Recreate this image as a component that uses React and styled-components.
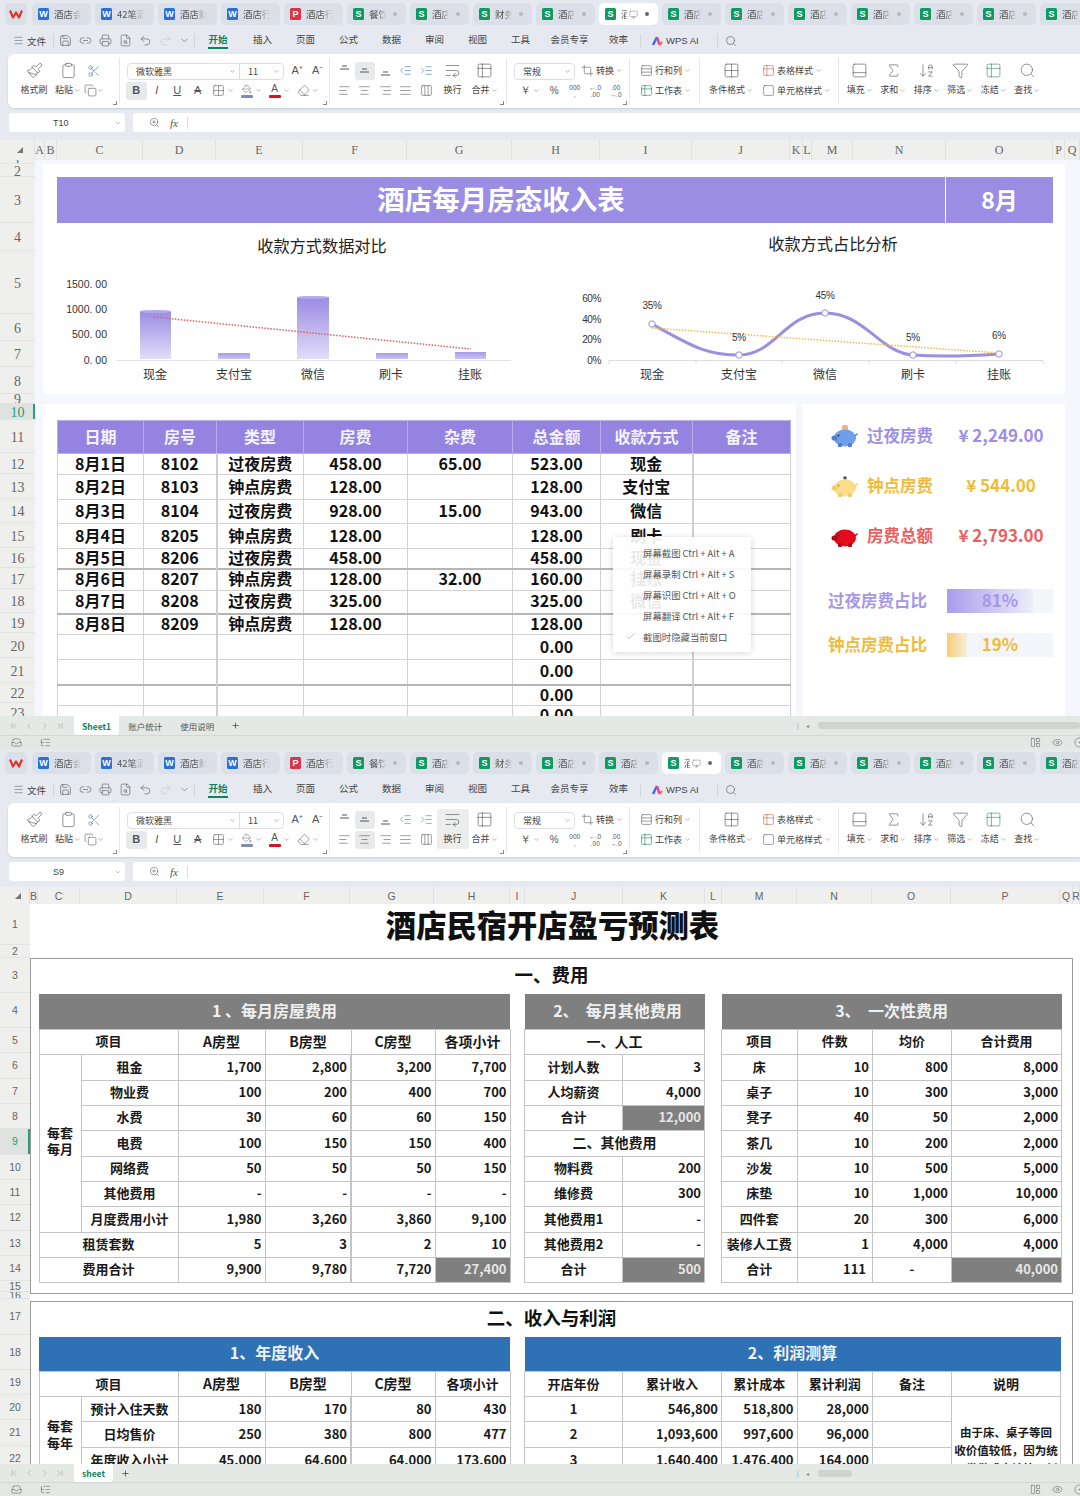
import React from "react";
import styled, { createGlobalStyle } from "styled-components";
import {
  AlignCenter, AlignJustify, AlignLeft, AlignRight, ArrowDownAZ, Check, ChevronDown, ChevronFirst,
  ChevronLast, ChevronLeft, ChevronRight, Clipboard, CircleDot, Copy, Crop, Eraser, Eye, Funnel, Grid2x2,
  IndentDecrease, IndentIncrease, Inbox, LayoutPanelLeft, ListTree, Menu, Monitor, PaintBucket, Paintbrush,
  PanelBottom, Plus, Printer, Redo2, Rows3, Save, Scissors, Search, Sigma, Square, Table2, Undo2, WrapText, ZoomIn,
  Columns3, Link2, FileSearch,
} from "lucide-react";

const CJK = `"Noto Sans CJK SC", "Noto Sans", sans-serif`;
const GREEN = "#12805e";

const GlobalStyle = createGlobalStyle`
  html, body { margin: 0; padding: 0; background: #fff; }
  body { width: 1080px; height: 1496px; overflow: hidden; font-family: ${CJK}; }
  * { box-sizing: border-box; }
`;

const Page = styled.div`
  width: 1080px;
  height: 1496px;
  display: flex;
  flex-direction: column;
  overflow: hidden;
`;

const Window = styled.section`
  height: ${(p) => p.$h}px;
  flex: none;
  display: flex;
  flex-direction: column;
  background: #e6e9f0;
  overflow: hidden;
`;

/* ---------- title tabs ---------- */
const TabBar = styled.div`
  height: 27px;
  flex: none;
  display: flex;
  padding: 3px 0 0 5px;
  overflow: hidden;
`;
const LogoTile = styled.div`
  width: 22px;
  height: 22px;
  margin-right: 5px;
  flex: none;
  border-radius: 5px;
  background: #dadfe8;
  display: flex;
  align-items: center;
  justify-content: center;
`;
const DocTab = styled.div`
  width: 59px;
  height: 22px;
  margin-right: 4px;
  flex: none;
  border-radius: 5px;
  background: ${(p) => (p.$active ? "#fff" : "#dadfe8")};
  display: flex;
  align-items: center;
  padding-left: 6px;
  position: relative;
`;
const DocIcon = styled.span`
  width: 11px;
  height: 12px;
  flex: none;
  border-radius: 1.5px;
  background: ${(p) => p.$bg};
  color: #fff;
  font: 700 9px/12px "Liberation Sans", sans-serif;
  text-align: center;
`;
const DocName = styled.span`
  margin-left: 5px;
  width: ${(p) => p.$w}px;
  font-size: 9.5px;
  color: #555;
  white-space: nowrap;
  overflow: hidden;
  -webkit-mask-image: linear-gradient(90deg, #000 55%, transparent);
  mask-image: linear-gradient(90deg, #000 55%, transparent);
`;
const DocDot = styled.span`
  position: absolute;
  right: 9px;
  top: 9px;
  width: 4px;
  height: 4px;
  border-radius: 50%;
  background: ${(p) => (p.$active ? "#666" : "#b4b8c0")};
`;

const TYPE = { W: "#2b6fd8", P: "#d8344a", S: "#0f9a63" };

function TabRow({ tabs, active }) {
  return (
    <TabBar>
      <LogoTile>
        <svg width="14" height="10" viewBox="0 0 14 10">
          <path d="M1 1.5 L4 8.5 L7 3.5 L10 8.5 L13 1.5" fill="none" stroke="#e0352b" strokeWidth="2.2" strokeLinejoin="round" />
        </svg>
      </LogoTile>
      {tabs.map(([type, name], i) => (
        <DocTab key={i} $active={i === active}>
          <DocIcon $bg={TYPE[type]}>{type}</DocIcon>
          {i === active ? (
            <>
              <DocName $w={7}>酒</DocName>
              <Monitor size={9} color="#777" strokeWidth={1.3} style={{ marginLeft: 1 }} />
            </>
          ) : (
            <DocName $w={type === "S" ? 17 : 27}>{name}</DocName>
          )}
          {type === "S" && <DocDot $active={i === active} />}
        </DocTab>
      ))}
    </TabBar>
  );
}

/* ---------- menu bar ---------- */
const MenuBar = styled.div`
  height: 27px;
  flex: none;
  display: flex;
  align-items: center;
  font-size: 9.5px;
  color: #444;
`;
const FileMenu = styled.div`
  width: 53px;
  padding-left: 13px;
  display: flex;
  align-items: center;
  gap: 3px;
`;
const MenuSep = styled.i`
  width: 1px;
  height: 14px;
  background: #d2d6de;
  flex: none;
`;
const QuickTools = styled.div`
  width: 140px;
  padding-left: 1px;
  display: flex;
  align-items: center;
  justify-content: space-around;
`;
const MenuTab = styled.div`
  width: ${(p) => p.$w || 43}px;
  flex: none;
  text-align: center;
`;
const MenuLabel = styled.span`
  display: inline-block;
  padding-bottom: 2px;
  line-height: 12px;
  font-weight: ${(p) => (p.$active ? 700 : 400)};
  color: ${(p) => (p.$active ? GREEN : "inherit")};
  border-bottom: 2px solid ${(p) => (p.$active ? GREEN : "transparent")};
`;
const AiLink = styled.div`
  width: 76px;
  padding-left: 11px;
  display: flex;
  align-items: center;
  gap: 3px;
  font: 9.5px "Liberation Sans", sans-serif;
`;

const icon = { size: 13, strokeWidth: 1.1, color: "#555" };

function MenuRow() {
  return (
    <MenuBar>
      <FileMenu>
        <Menu size={11} strokeWidth={1.1} color="#555" />
        文件
      </FileMenu>
      <MenuSep />
      <QuickTools>
        <Save {...icon} />
        <Link2 {...icon} />
        <Printer {...icon} />
        <FileSearch {...icon} />
        <Undo2 {...icon} />
        <Redo2 {...icon} color="#c2c5cb" />
        <ChevronDown size={11} strokeWidth={1.2} color="#555" />
      </QuickTools>
      <MenuSep />
      <MenuTab $w={46}>
        <MenuLabel $active>开始</MenuLabel>
      </MenuTab>
      {["插入", "页面", "公式", "数据", "审阅", "视图", "工具"].map((t) => (
        <MenuTab key={t}>
          <MenuLabel>{t}</MenuLabel>
        </MenuTab>
      ))}
      <MenuTab $w={55}>
        <MenuLabel>会员专享</MenuLabel>
      </MenuTab>
      <MenuTab>
        <MenuLabel>效率</MenuLabel>
      </MenuTab>
      <MenuSep />
      <AiLink>
        <svg width="11" height="10" viewBox="0 0 11 10">
          <path d="M1 9 L5 1" stroke="#3b6cf0" strokeWidth="2.4" />
          <path d="M5 1 L7.5 9" stroke="#e8409a" strokeWidth="2.4" />
          <path d="M7.5 9 L10 6" stroke="#f06a3b" strokeWidth="2" />
        </svg>
        WPS AI
      </AiLink>
      <MenuSep />
      <Search size={12} strokeWidth={1.2} color="#555" style={{ marginLeft: 7 }} />
    </MenuBar>
  );
}

/* ---------- ribbon ---------- */
const RibbonBar = styled.div`
  height: 54px;
  flex: none;
  margin-left: 8px;
  display: flex;
  background: #fff;
  border-radius: 6px 0 0 6px;
  box-shadow: 0 1px 2px rgba(60, 70, 90, 0.15);
  font-size: 9px;
  color: #444;
`;
const RibbonGroup = styled.div`
  width: ${(p) => p.$w}px;
  height: 100%;
  flex: none;
  position: relative;
  display: flex;
  padding: 7px 0 0 ${(p) => p.$pl || 0}px;
  &::after {
    content: "";
    position: absolute;
    right: 0;
    top: 4px;
    bottom: 4px;
    width: 1px;
    background: ${(p) => (p.$last ? "transparent" : "#e6e8ec")};
  }
`;
const Launcher = styled.span`
  position: absolute;
  right: 3px;
  bottom: 3px;
  width: 4px;
  height: 4px;
  border-right: 1px solid #888;
  border-bottom: 1px solid #888;
`;
const Stack = styled.div`
  display: flex;
  flex-direction: column;
  width: ${(p) => (p.$w ? `${p.$w}px` : "auto")};
  flex: none;
`;
const ToolRow = styled.div`
  height: 19px;
  display: flex;
  align-items: center;
  & + & { margin-top: 1px; }
`;
const BigTool = styled.div`
  width: ${(p) => p.$w}px;
  height: 40px;
  flex: none;
  margin-top: -1px;
  border-radius: 3px;
  background: ${(p) => (p.$active ? "#eceded" : "transparent")};
  display: flex;
  flex-direction: column;
  align-items: center;
`;
const BigIcon = styled.div`
  height: 21px;
  display: flex;
  align-items: center;
  justify-content: center;
`;
const BigLabel = styled.div`
  height: 18px;
  line-height: 18px;
  white-space: nowrap;
  display: flex;
  align-items: center;
  gap: 1px;
`;
const IconBtn = styled.div`
  width: 20.5px;
  height: 18px;
  flex: none;
  border-radius: 3px;
  background: ${(p) => (p.$active ? "#e8e9ea" : "transparent")};
  display: flex;
  align-items: center;
  justify-content: center;
  color: #555;
`;
const CaretTool = styled.div`
  width: ${(p) => p.$w}px;
  height: 18px;
  flex: none;
  padding-left: ${(p) => (p.$pl === undefined ? 4 : p.$pl)}px;
  display: flex;
  align-items: center;
  gap: 2px;
  white-space: nowrap;
  & + & { margin-top: 2px; }
`;
const Glyph = styled.span`
  font: ${(p) => (p.$italic ? "italic " : "")}${(p) => (p.$bold ? 700 : 400)} ${(p) => p.$size || 11}px/1 "Liberation Sans", sans-serif;
  text-decoration: ${(p) => p.$deco || "none"};
  color: #555;
  white-space: nowrap;
`;
const ColorGlyph = styled.span`
  width: 13px;
  display: flex;
  flex-direction: column;
  align-items: center;
  line-height: 1;
  &::after {
    content: "";
    width: 12px;
    height: 3px;
    margin-top: 1px;
    background: ${(p) => p.$bar};
    border-radius: 1px;
  }
`;
const SelectBox = styled.div`
  height: 17px;
  margin-top: 1px;
  display: flex;
  border: 1px solid #dcdee2;
  border-radius: 4px;
  flex: none;
`;
const SelectPart = styled.div`
  width: ${(p) => p.$w}px;
  height: 100%;
  padding: 0 3px 0 8px;
  display: flex;
  align-items: center;
  justify-content: space-between;
  & + & { border-left: 1px solid #dcdee2; }
`;
const TinyNum = styled.span`
  font: 6.5px/7px "Liberation Sans", sans-serif;
  text-align: center;
  color: #555;
`;

const sm = { size: 13, strokeWidth: 1.05, color: "#555" };
const lg = { size: 17, strokeWidth: 0.9, color: "#555" };
const Caret = () => <ChevronDown size={7} strokeWidth={1.6} color="#666" />;
const Big = ({ w, ic, label, caret, active }) => (
  <BigTool $w={w} $active={active}>
    <BigIcon>{ic}</BigIcon>
    <BigLabel>
      {label}
      {caret && <Caret />}
    </BigLabel>
  </BigTool>
);
// vertical alignment glyphs: a short and a long rule sitting at the top, middle or bottom
const VAlign = ({ y }) => (
  <svg width="13" height="13" viewBox="0 0 13 13">
    <path d={`M4 ${y} H9 M2 ${y + 3} H11`} stroke="#555" strokeWidth="1.1" fill="none" />
  </svg>
);

function Ribbon({ alt }) {
  return (
    <RibbonBar>
      <RibbonGroup $w={112} $pl={8}>
        <Big w={36} ic={<Paintbrush {...lg} />} label="格式刷" />
        <Big w={32} ic={<Clipboard {...lg} />} label="粘贴" caret />
        <Stack $w={30}>
          <ToolRow style={{ paddingLeft: 3 }}>
            <Scissors size={14} strokeWidth={1} color="#3d6fa8" />
          </ToolRow>
          <ToolRow>
            <Copy {...sm} />
            <Caret />
          </ToolRow>
        </Stack>
        <Launcher />
      </RibbonGroup>

      <RibbonGroup $w={210} $pl={7}>
        <Stack>
          <ToolRow>
            <SelectBox>
              <SelectPart $w={111}>
                微软雅黑
                <Caret />
              </SelectPart>
              <SelectPart $w={44}>
                11
                <Caret />
              </SelectPart>
            </SelectBox>
            <IconBtn style={{ marginLeft: 3 }}>
              <Glyph $size={11}>A⁺</Glyph>
            </IconBtn>
            <IconBtn>
              <Glyph $size={11}>A⁻</Glyph>
            </IconBtn>
          </ToolRow>
          <ToolRow style={{ marginLeft: -1 }}>
            <IconBtn $active>
              <Glyph $bold>B</Glyph>
            </IconBtn>
            <IconBtn>
              <Glyph $italic>I</Glyph>
            </IconBtn>
            <IconBtn>
              <Glyph $deco="underline">U</Glyph>
            </IconBtn>
            <IconBtn>
              <Glyph $deco="line-through">A</Glyph>
            </IconBtn>
            <CaretTool $w={28}>
              <Grid2x2 {...sm} />
              <Caret />
            </CaretTool>
            <CaretTool $w={28} style={{ marginTop: 0 }}>
              <ColorGlyph $bar="#7f8db0">
                <PaintBucket size={10} strokeWidth={1.1} color="#555" />
              </ColorGlyph>
              <Caret />
            </CaretTool>
            <CaretTool $w={29} style={{ marginTop: 0 }}>
              <ColorGlyph $bar="#d9101e">
                <Glyph $size={10}>A</Glyph>
              </ColorGlyph>
              <Caret />
            </CaretTool>
            <CaretTool $w={28} style={{ marginTop: 0 }}>
              <Eraser {...sm} />
              <Caret />
            </CaretTool>
          </ToolRow>
        </Stack>
        <Launcher />
      </RibbonGroup>

      <RibbonGroup $w={177} $pl={4}>
        <Stack>
          <ToolRow>
            <IconBtn><VAlign y={2} /></IconBtn>
            <IconBtn $active><VAlign y={5} /></IconBtn>
            <IconBtn><VAlign y={8} /></IconBtn>
            <IconBtn><IndentDecrease {...sm} color="#3d6fa8" /></IconBtn>
            <IconBtn><IndentIncrease {...sm} color="#3d6fa8" /></IconBtn>
          </ToolRow>
          <ToolRow>
            <IconBtn><AlignLeft {...sm} /></IconBtn>
            <IconBtn $active={alt}><AlignCenter {...sm} /></IconBtn>
            <IconBtn><AlignRight {...sm} /></IconBtn>
            <IconBtn><AlignJustify {...sm} /></IconBtn>
            <IconBtn><Columns3 {...sm} /></IconBtn>
          </ToolRow>
        </Stack>
        <Big w={32} active={alt} ic={<WrapText {...lg} />} label="换行" />
        <Big w={32} ic={<Table2 {...lg} />} label="合并" caret />
        <Launcher />
      </RibbonGroup>

      <RibbonGroup $w={123} $pl={7}>
        <Stack>
          <ToolRow>
            <SelectBox>
              <SelectPart $w={59}>
                常规
                <Caret />
              </SelectPart>
            </SelectBox>
            <CaretTool $w={50} $pl={6}>
              <Crop {...sm} />
              转换
              <Caret />
            </CaretTool>
          </ToolRow>
          <ToolRow>
            <CaretTool $w={30} $pl={6}>
              <Glyph $size={11}>￥</Glyph>
              <Caret />
            </CaretTool>
            <IconBtn><Glyph $size={10}>%</Glyph></IconBtn>
            <IconBtn><TinyNum>000<br />,</TinyNum></IconBtn>
            <IconBtn><TinyNum>←.0<br />.00</TinyNum></IconBtn>
            <IconBtn><TinyNum>.00<br />→.0</TinyNum></IconBtn>
          </ToolRow>
        </Stack>
        <Launcher />
      </RibbonGroup>

      <RibbonGroup $w={70} $pl={10}>
        <Stack>
          <CaretTool $w={58} $pl={0}>
            <Rows3 {...sm} />
            行和列
            <Caret />
          </CaretTool>
          <CaretTool $w={58} $pl={0}>
            <Table2 {...sm} color={GREEN} />
            工作表
            <Caret />
          </CaretTool>
        </Stack>
      </RibbonGroup>

      <RibbonGroup $w={139} $pl={4}>
        <Big w={54} ic={<Grid2x2 {...lg} />} label="条件格式" caret />
        <Stack>
          <CaretTool $w={78}>
            <Table2 {...sm} color="#c0603a" />
            表格样式
            <Caret />
          </CaretTool>
          <CaretTool $w={78}>
            <Square {...sm} />
            单元格样式
            <Caret />
          </CaretTool>
        </Stack>
      </RibbonGroup>

      <RibbonGroup $w={200} $pl={4} $last>
        <Big w={33.5} ic={<PanelBottom {...lg} />} label="填充" caret />
        <Big w={33.5} ic={<Sigma {...lg} />} label="求和" caret />
        <Big w={33.5} ic={<ArrowDownAZ {...lg} />} label="排序" caret />
        <Big w={33.5} ic={<Funnel {...lg} />} label="筛选" caret />
        <Big w={33.5} ic={<Table2 {...lg} color="#3a8a6a" />} label="冻结" caret />
        <Big w={33.5} ic={<Search {...lg} />} label="查找" caret />
      </RibbonGroup>
    </RibbonBar>
  );
}

/* ---------- formula bar ---------- */
const FormulaRow = styled.div`
  height: 19px;
  flex: none;
  margin-top: 5px;
  margin-bottom: ${(p) => p.$mb}px;
  display: flex;
  gap: 8px;
  padding-left: 9px;
`;
const NameBox = styled.div`
  width: 116px;
  height: 100%;
  background: #fff;
  border-radius: 3px;
  display: flex;
  align-items: center;
  justify-content: space-between;
  padding: 0 3px 0 44px;
  font: 9px "Liberation Sans", sans-serif;
  color: #444;
`;
const FormulaInput = styled.div`
  flex: 1;
  height: 100%;
  background: #fff;
  border-radius: 3px 0 0 3px;
  display: flex;
  align-items: center;
  padding-left: 16px;
  gap: 10px;
`;
const Fx = styled.span`
  font: italic 11px "Liberation Serif", serif;
  color: #555;
  padding-right: 9px;
  border-right: 1px solid #ddd;
`;

/* ---------- grid headers ---------- */
const ColBar = styled.div`
  height: ${(p) => p.$h}px;
  flex: none;
  display: flex;
  background: #efefed;
  overflow: hidden;
`;
const ColCell = styled.div`
  width: ${(p) => p.$w}px;
  flex: none;
  display: flex;
  align-items: center;
  justify-content: center;
  border-right: 1px solid #e1e1df;
  font: ${(p) => (p.$serif ? `12px "Liberation Serif", serif` : `10.5px "Liberation Sans", sans-serif`)};
  color: #666;
  overflow: hidden;
  position: relative;
`;
const Corner = styled.i`
  width: 0;
  height: 0;
  margin-left: 6px;
  border-left: 6px solid transparent;
  border-bottom: 6px solid #777;
`;
const SheetBody = styled.div`
  flex: 1;
  min-height: 0;
  display: flex;
  overflow: hidden;
`;
const RowRail = styled.div`
  width: ${(p) => p.$w}px;
  flex: none;
  background: #efefed;
`;
const RowCell = styled.div`
  height: ${(p) => p.$h}px;
  display: flex;
  align-items: center;
  justify-content: center;
  overflow: hidden;
  padding-top: ${(p) => (p.$serif ? 3 : 0)}px;
  border-bottom: 1px solid #e3e3e1;
  background: ${(p) => (p.$sel ? "#dfe3e0" : "transparent")};
  box-shadow: ${(p) => (p.$sel ? "inset -2px 0 0 #2a9d7a" : "none")};
  font: ${(p) => (p.$serif ? `14px "Liberation Serif", serif` : `10.5px "Liberation Sans", sans-serif`)};
  line-height: 1;
  color: ${(p) => (p.$sel ? "#2a9d7a" : "#666")};
`;

function Columns({ cols, h, serif, cornerW }) {
  return (
    <ColBar $h={h}>
      <ColCell $w={cornerW} $serif={serif}>
        <Corner />
      </ColCell>
      {cols.map(([label, w]) => (
        <ColCell key={label} $w={w} $serif={serif}>
          {label}
        </ColCell>
      ))}
    </ColBar>
  );
}
function Rows({ rows, width, serif, sel }) {
  return (
    <RowRail $w={width}>
      {rows.map((h, i) => (
        <RowCell key={i} $h={h} $serif={serif} $sel={i + 1 === sel}>
          {i + 1}
        </RowCell>
      ))}
    </RowRail>
  );
}

/* ---------- sheet tabs & status ---------- */
const SheetBar = styled.div`
  height: ${(p) => p.$h}px;
  flex: none;
  display: flex;
  align-items: stretch;
  background: #e4e9e6;
  font-size: 8.5px;
  color: #555;
`;
const SheetNav = styled.div`
  width: 74px;
  display: flex;
  align-items: center;
  justify-content: space-around;
  padding: 0 6px;
`;
const SheetTab = styled.div`
  padding: 0 ${(p) => (p.$active ? 8 : 9)}px;
  min-width: 39px;
  display: flex;
  align-items: center;
  background: ${(p) => (p.$active ? "#fff" : "transparent")};
  color: ${(p) => (p.$active ? GREEN : "#555")};
  font-weight: ${(p) => (p.$active ? 700 : 400)};
  border-radius: 0 0 3px 3px;
`;
const AddSheet = styled.div`
  margin-left: 4px;
  padding-left: 4px;
  display: flex;
  align-items: center;
`;
const ScrollArea = styled.div`
  width: 283px;
  margin-left: auto;
  flex: none;
  display: flex;
  align-items: center;
  gap: 7px;
  color: #888;
  font-size: 6px;
`;
const ScrollThumb = styled.div`
  height: 7px;
  border-radius: 3px;
  background: #cfd4d0;
  margin-left: 2px;
`;
const StatusBar = styled.div`
  height: ${(p) => p.$h}px;
  flex: none;
  display: flex;
  align-items: center;
  padding-left: 11px;
  gap: 18px;
  background: #e4e8e5;
  border-top: 1px solid #d4d8d4;
`;
const StatusRight = styled.div`
  margin-left: auto;
  margin-right: -5px;
  display: flex;
  gap: 11px;
`;

const nav = { size: 10, strokeWidth: 1.3, color: "#999" };
const st = { size: 11, strokeWidth: 1.1, color: "#555" };

function SheetTabs({ h, sheets, thumb }) {
  return (
    <SheetBar $h={h}>
      <SheetNav>
        <ChevronFirst {...nav} />
        <ChevronLeft {...nav} />
        <ChevronRight {...nav} />
        <ChevronLast {...nav} />
      </SheetNav>
      {sheets.map((s, i) => (
        <SheetTab key={s} $active={i === 0}>{s}</SheetTab>
      ))}
      <AddSheet>
        <Plus size={9} strokeWidth={2} color="#444" />
      </AddSheet>
      <ScrollArea>
        <span>|</span>
        <span>◂</span>
        <ScrollThumb style={{ width: thumb }} />
      </ScrollArea>
    </SheetBar>
  );
}
const Status = ({ h }) => (
  <StatusBar $h={h}>
    <Inbox {...st} />
    <ListTree {...st} />
    <StatusRight>
      <LayoutPanelLeft {...st} />
      <Eye {...st} />
      <CircleDot {...st} />
    </StatusRight>
  </StatusBar>
);

/* ---------- sheet 1: monthly room income dashboard ---------- */
const Dashboard = styled.div`
  flex: 1;
  min-width: 0;
  position: relative;
  background: #f6f7fd;
  padding: 4px 15px 0 8px;
  overflow: hidden;
`;
const TopPanel = styled.div`
  height: 230px;
  background: #fff;
  padding: 13px 12px 0 14px;
`;
const Banner = styled.div`
  height: 46px;
  display: flex;
  gap: 1px;
  color: #fff;
  font-weight: 700;
`;
const BannerTitle = styled.div`
  flex: 1;
  background: #9b8ce4;
  display: flex;
  align-items: center;
  justify-content: center;
  padding-bottom: 2px;
  font-size: ${(p) => p.$size}px;
  line-height: 1;
`;
const ChartRow = styled.div`
  display: flex;
`;
const ChartBox = styled.div`
  width: 498px;
  flex: none;
`;
const ChartTitle = styled.div`
  height: ${(p) => p.$h}px;
  display: flex;
  align-items: center;
  justify-content: center;
  padding: 0 0 2px ${(p) => p.$pl}px;
  font-size: 16.2px;
  color: #222;
`;
const BottomRow = styled.div`
  margin-top: 10px;
  height: 320px;
  display: flex;
  gap: 7px;
`;
const TablePanel = styled.div`
  width: 753px;
  flex: none;
  background: #fff;
  padding: 16px 0 0 14px;
`;
const RoomTable = styled.table`
  width: 733px;
  table-layout: fixed;
  border-collapse: collapse;
  font-size: 16px;
  font-weight: 700;
  color: #111;
  line-height: 1;
  td { border: 1px solid #d2d2d2; padding: 0 0 3px; text-align: center; white-space: nowrap; }
  td:nth-child(2), td:nth-child(7) { border-right: 2px solid #cfcfcf; }
  th { background: #9483e0; color: #f4f2fd; border: 1px solid #b8aeea; padding: 0 0 3px; font-weight: 700; }
`;
const RoomRow = styled.tr`
  height: ${(p) => p.$h}px;
  td { border-top-color: ${(p) => (p.$strong ? "#b5b5b5" : "#d2d2d2")}; border-top-width: ${(p) => (p.$strong ? 2 : 1)}px; }
`;
const StatsPanel = styled.div`
  width: 262px;
  flex: none;
  background: #fff;
  padding-top: 7px;
`;
const StatRow = styled.div`
  height: 50px;
  padding-left: 28px;
  display: flex;
  align-items: center;
  color: ${(p) => p.$color};
  font-weight: 700;
`;
const StatName = styled.div`
  margin-left: 9px;
  width: 70px;
  flex: none;
  font-size: 16.5px;
  padding-bottom: 3px;
`;
const StatValue = styled.div`
  flex: 1;
  text-align: center;
  font-size: 17px;
  padding-bottom: 3px;
`;
const RatioRow = styled.div`
  margin-top: ${(p) => p.$mt}px;
  height: 24px;
  padding-left: 25px;
  display: flex;
  align-items: center;
  color: ${(p) => p.$color};
  font-weight: 700;
`;
const RatioName = styled.div`
  width: 119px;
  flex: none;
  font-size: 16.5px;
  padding-bottom: 2px;
`;
const RatioBar = styled.div`
  width: 106px;
  height: 100%;
  flex: none;
  position: relative;
  background: #f4f5fb;
  display: flex;
  align-items: center;
  justify-content: center;
  padding-bottom: 3px;
  font-size: 17px;
`;
const RatioFill = styled.div`
  position: absolute;
  left: 0;
  top: 0;
  bottom: 0;
  background: linear-gradient(90deg, ${(p) => p.$c1}, ${(p) => p.$c2});
`;
const RatioText = styled.span`
  position: relative;
`;
const ShotMenu = styled.div`
  position: absolute;
  left: 578px;
  top: 377px;
  width: 138px;
  height: 115px;
  padding-top: 5px;
  background: rgba(255, 255, 255, 0.91);
  box-shadow: 0 1px 7px rgba(0, 0, 0, 0.16);
  border-radius: 2px;
  font-size: 9.4px;
  color: #555;
`;
const ShotItem = styled.div`
  height: 21px;
  display: grid;
  grid-template-columns: 30px 1fr;
  align-items: center;
  justify-items: start;
  white-space: nowrap;
`;

const ROOM_COLS = [86, 73, 87, 104, 105, 88, 92, 98];
const ROOM_HEAD = ["日期", "房号", "类型", "房费", "杂费", "总金额", "收款方式", "备注"];
const ROOM_ROWS = [
  [21, "8月1日", "8102", "过夜房费", "458.00", "65.00", "523.00", "现金"],
  [25, "8月2日", "8103", "钟点房费", "128.00", "", "128.00", "支付宝"],
  [24, "8月3日", "8104", "过夜房费", "928.00", "15.00", "943.00", "微信"],
  [25, "8月4日", "8205", "钟点房费", "128.00", "", "128.00", "刷卡"],
  [20, "8月5日", "8206", "过夜房费", "458.00", "", "458.00", "现金"],
  [21, "8月6日", "8207", "钟点房费", "128.00", "32.00", "160.00", "挂账"],
  [24, "8月7日", "8208", "过夜房费", "325.00", "", "325.00", "微信"],
  [20, "8月8日", "8209", "钟点房费", "128.00", "", "128.00", ""],
  [25, "", "", "", "", "", "0.00", ""],
  [25, "", "", "", "", "", "0.00", ""],
  [20, "", "", "", "", "", "0.00", ""],
  [20, "", "", "", "", "", "0.00", ""],
];
const STRONG_ROWS = [5, 7, 10];

const BARS = [
  [140, 311, 31],
  [218, 353, 32],
  [297, 297, 32],
  [376, 353, 32],
  [455, 352, 31],
];
const AXIS_X = ["现金", "支付宝", "微信", "刷卡", "挂账"];
const chartText = { fontFamily: `"Liberation Sans", ${CJK}`, fill: "#333" };

function BarChart() {
  return (
    <svg width="498" height="120" viewBox="57 269 498 120" style={{ display: "block" }}>
      <defs>
        <linearGradient id="barFill" x1="0" y1="0" x2="0" y2="1">
          <stop offset="0" stopColor="#9a8be2" />
          <stop offset="1" stopColor="#e2ddf9" />
        </linearGradient>
        <linearGradient id="barFlat" x1="0" y1="0" x2="0" y2="1">
          <stop offset="0" stopColor="#a89be8" />
          <stop offset="1" stopColor="#cbc3f2" />
        </linearGradient>
      </defs>
      {[["1500. 00", 288], ["1000. 00", 313], ["500. 00", 338], ["0. 00", 364]].map(([t, y]) => (
        <text key={t} x="107" y={y} textAnchor="end" fontSize="10.5" {...chartText}>{t}</text>
      ))}
      <line x1="116" y1="360.5" x2="511" y2="360.5" stroke="#e4e4e8" />
      {BARS.map(([x, y, w]) => {
        const tall = y < 340;
        return (
          <g key={x}>
            <rect x={x} y={y} width={w} height={359 - y} fill={tall ? "url(#barFill)" : "url(#barFlat)"} />
            {tall && <ellipse cx={x + w / 2} cy={y + 0.5} rx={w / 2} ry="1.6" fill="#b3a8ec" />}
          </g>
        );
      })}
      <line x1="154" y1="317" x2="471" y2="349" stroke="#dd5f63" strokeWidth="1.5" strokeDasharray="1.5 1.5" />
      {AXIS_X.map((t, i) => (
        <text key={t} x={[155, 234, 313, 391, 470][i]} y="379" textAnchor="middle" fontSize="12" {...chartText}>{t}</text>
      ))}
    </svg>
  );
}

const LINE_PTS = [[652, 324], [739, 355], [825, 313], [913, 355], [999, 354]];
const LINE_LBL = [["35%", 652, 309], ["5%", 739, 341], ["45%", 825, 299], ["5%", 913, 341], ["6%", 999, 339]];

function LineChart() {
  return (
    <svg width="498" height="124" viewBox="555 265 498 124" style={{ display: "block" }}>
      {[["60%", 302], ["40%", 323], ["20%", 343], ["0%", 364]].map(([t, y]) => (
        <text key={t} x="601" y={y} textAnchor="end" fontSize="10" letterSpacing="-0.4" {...chartText}>{t}</text>
      ))}
      <line x1="609" y1="360.5" x2="1043" y2="360.5" stroke="#dcdce0" />
      {[609, 696, 782, 869, 956, 1043].map((x) => (
        <line key={x} x1={x} y1="360" x2={x} y2="364" stroke="#dcdce0" />
      ))}
      <path
        d="M652 324 C690 345 705 355 739 355 C775 355 785 313 825 313 C865 313 880 353 913 355 C940 357 970 356 999 354"
        fill="none"
        stroke="#9d8ee0"
        strokeWidth="3"
      />
      <line x1="652" y1="328" x2="999" y2="353" stroke="#ecbb4c" strokeWidth="1.5" strokeDasharray="1.5 1.5" />
      {LINE_PTS.map(([x, y]) => (
        <circle key={x} cx={x} cy={y} r="3.2" fill="#fff" stroke="#9d8ee0" strokeWidth="1" />
      ))}
      {LINE_LBL.map(([t, x, y]) => (
        <text key={x} x={x} y={y} textAnchor="middle" fontSize="10" letterSpacing="-0.3" {...chartText}>{t}</text>
      ))}
      {AXIS_X.map((t, i) => (
        <text key={t} x={LINE_PTS[i][0]} y="379" textAnchor="middle" fontSize="12" {...chartText}>{t}</text>
      ))}
    </svg>
  );
}

function Piggy({ body, ear, coin, eye = "#333" }) {
  return (
    <svg width="27" height="25" viewBox="0 0 27 25" style={{ flex: "none" }}>
      {coin && <ellipse cx="14" cy={coin.y} rx={coin.r} ry={coin.r} fill={coin.c} />}
      <ellipse cx="14" cy="14" rx="11" ry="8.5" fill={body} />
      <ellipse cx="3.5" cy="14" rx="3" ry="2.6" fill={ear} />
      <rect x="7" y="19" width="4" height="4" rx="1" fill={ear} />
      <rect x="17" y="19" width="4" height="4" rx="1" fill={ear} />
      <path d="M24 12 L26.5 9.5" stroke={ear} strokeWidth="1.2" />
      <circle cx="7.5" cy="11.5" r="1" fill={eye} />
    </svg>
  );
}

function RoomDashboard() {
  return (
    <Dashboard>
      <TopPanel>
        <Banner>
          <BannerTitle $size={27.5}>酒店每月房态收入表</BannerTitle>
          <BannerTitle $size={23} style={{ flex: "0 0 107px" }}>8月</BannerTitle>
        </Banner>
        <ChartRow>
          <ChartBox>
            <ChartTitle $h={46} $pl={32}>收款方式数据对比</ChartTitle>
            <BarChart />
          </ChartBox>
          <ChartBox>
            <ChartTitle $h={42} $pl={58}>收款方式占比分析</ChartTitle>
            <LineChart />
          </ChartBox>
        </ChartRow>
      </TopPanel>
      <BottomRow>
        <TablePanel>
          <RoomTable>
            <colgroup>
              {ROOM_COLS.map((w, i) => (
                <col key={i} style={{ width: w }} />
              ))}
            </colgroup>
            <thead>
              <tr style={{ height: 33 }}>
                {ROOM_HEAD.map((h) => (
                  <th key={h}>{h}</th>
                ))}
              </tr>
            </thead>
            <tbody>
              {ROOM_ROWS.map(([h, ...cells], i) => (
                <RoomRow key={i} $h={h} $strong={STRONG_ROWS.includes(i)}>
                  {[0, 1, 2, 3, 4, 5, 6, 7].map((c) => (
                    <td key={c}>{cells[c] || ""}</td>
                  ))}
                </RoomRow>
              ))}
            </tbody>
          </RoomTable>
        </TablePanel>
        <StatsPanel>
          <StatRow $color="#9d8fe4">
            <Piggy body="#6f9fe8" ear="#4d7fd0" coin={{ y: 4, r: 3.2, c: "#e9b48a" }} />
            <StatName>过夜房费</StatName>
            <StatValue>¥ 2,249.00</StatValue>
          </StatRow>
          <StatRow $color="#f0bb3c">
            <Piggy body="#fbdc8a" ear="#f5cc6a" coin={{ y: 4, r: 1.8, c: "#555" }} eye="#a88838" />
            <StatName>钟点房费</StatName>
            <StatValue>¥ 544.00</StatValue>
          </StatRow>
          <StatRow $color="#ec5f5f">
            <Piggy body="#e60b1a" ear="#b00812" />
            <StatName>房费总额</StatName>
            <StatValue>¥ 2,793.00</StatValue>
          </StatRow>
          <RatioRow $mt={28} $color="#a498e8">
            <RatioName>过夜房费占比</RatioName>
            <RatioBar>
              <RatioFill $c1="#a99cec" $c2="rgba(200,192,242,0.15)" style={{ width: "81%" }} />
              <RatioText>81%</RatioText>
            </RatioBar>
          </RatioRow>
          <RatioRow $mt={20} $color="#f0bb3c">
            <RatioName>钟点房费占比</RatioName>
            <RatioBar>
              <RatioFill $c1="#f5cf74" $c2="rgba(248,224,160,0.3)" style={{ width: "19%" }} />
              <RatioText>19%</RatioText>
            </RatioBar>
          </RatioRow>
        </StatsPanel>
      </BottomRow>
      <ShotMenu>
        {["屏幕截图 Ctrl + Alt + A", "屏幕录制 Ctrl + Alt + S", "屏幕识图 Ctrl + Alt + O", "屏幕翻译 Ctrl + Alt + F"].map((t) => (
          <ShotItem key={t}>
            <span />
            <span>{t}</span>
          </ShotItem>
        ))}
        <ShotItem>
          <Check size={11} strokeWidth={1.1} color="#888" style={{ marginLeft: 12 }} />
          <span>截图时隐藏当前窗口</span>
        </ShotItem>
      </ShotMenu>
    </Dashboard>
  );
}

/* ---------- sheet 2: profit forecast ---------- */
const Forecast = styled.div`
  flex: 1;
  min-width: 0;
  background: #fff;
  overflow: hidden;
`;
const ForecastTitle = styled.div`
  height: 54px;
  padding: 2px 0 0 2px;
  width: 1043px;
  text-align: center;
  font-size: 30.3px;
  font-weight: 900;
  line-height: 37px;
  color: #111;
`;
const Section = styled.div`
  width: 1043px;
  border: 1px solid #9a9a9a;
  margin-bottom: 7px;
  padding-bottom: 10px;
`;
const SectionTitle = styled.div`
  height: 35px;
  text-align: center;
  font-size: 18.5px;
  font-weight: 700;
  line-height: 31px;
  color: #111;
`;
const TableRow = styled.div`
  display: flex;
  align-items: flex-start;
  padding-left: 7.5px;
`;
const Sheet = styled.table`
  flex: none;
  table-layout: fixed;
  border-collapse: collapse;
  width: ${(p) => p.$w}px;
  margin-right: ${(p) => p.$mr || 0}px;
  font-size: 13px;
  font-weight: 700;
  color: #1a1a1a;
  line-height: 1;
  td { border: 1px solid #c4c4c4; padding: 0 0 2px; white-space: nowrap; text-align: center; }
`;
const Band = styled.th`
  height: 35px;
  padding: 0 0 3px ${(p) => p.$pl || 0}px;
  background: ${(p) => p.$bg};
  color: #f0f0f0;
  font-size: 16px;
  font-weight: 700;
  white-space: pre;
`;
const Num = styled.td`
  && {
    text-align: right;
    padding-right: ${(p) => p.$pr ?? 3}px;
    background: ${(p) => (p.$fill ? "#7f7f7f" : "transparent")};
    color: ${(p) => (p.$fill ? "#e6e6e6" : "inherit")};
    border-right-width: ${(p) => (p.$thick ? 2 : 1)}px;
  }
`;
const Head = styled.td`
  && { font-size: ${(p) => p.$size || 14}px; }
`;
const Note = styled.td`
  && {
    vertical-align: top;
    padding: 26px 1px 0;
    font-size: 11.5px;
    line-height: 18px;
  }
`;

const Grid = ({ cols }) => (
  <colgroup>
    {cols.map((w, i) => (
      <col key={i} style={{ width: w }} />
    ))}
  </colgroup>
);

const HEIGHTS = [25, 26, 25, 25, 26, 25, 25, 26, 25, 25];
const COST_A = [
  ["租金", "1,700", "2,800", "3,200", "7,700"],
  ["物业费", "100", "200", "400", "700"],
  ["水费", "30", "60", "60", "150"],
  ["电费", "100", "150", "150", "400"],
  ["网络费", "50", "50", "50", "150"],
  ["其他费用", "-", "-", "-", "-"],
  ["月度费用小计", "1,980", "3,260", "3,860", "9,100"],
];
const COST_B = [
  ["h", "一、人工"],
  ["计划人数", "3"],
  ["人均薪资", "4,000"],
  ["合计", "12,000", true],
  ["h", "二、其他费用"],
  ["物料费", "200"],
  ["维修费", "300"],
  ["其他费用1", "-"],
  ["其他费用2", "-"],
  ["合计", "500", true],
];
const COST_C = [
  ["床", "10", "800", "8,000"],
  ["桌子", "10", "300", "3,000"],
  ["凳子", "40", "50", "2,000"],
  ["茶几", "10", "200", "2,000"],
  ["沙发", "10", "500", "5,000"],
  ["床垫", "10", "1,000", "10,000"],
  ["四件套", "20", "300", "6,000"],
  ["装修人工费", "1", "4,000", "4,000"],
];
const INCOME = [
  ["预计入住天数", "180", "170", "80", "430"],
  ["日均售价", "250", "380", "800", "477"],
  ["年度收入小计", "45,000", "64,600", "64,000", "173,600"],
];
const PROFIT = [
  ["1", "546,800", "518,800", "28,000"],
  ["2", "1,093,600", "997,600", "96,000"],
  ["3", "1,640,400", "1,476,400", "164,000"],
  ["", "", "", ""],
  ["", "", "", ""],
  ["", "", "", ""],
];

const HOUSE_COLS = [42, 97, 87, 86, 84, 75];

function RoomHead({ size }) {
  return (
    <tr style={{ height: 25 }}>
      <Head colSpan={2} $size={13}>项目</Head>
      <Head>A房型</Head>
      <Head>B房型</Head>
      <Head>C房型</Head>
      <Head $size={size}>各项小计</Head>
    </tr>
  );
}

function ForecastSheet() {
  return (
    <Forecast>
      <ForecastTitle>酒店民宿开店盈亏预测表</ForecastTitle>
      <Section>
        <SectionTitle>一、费用</SectionTitle>
        <TableRow>
          <Sheet $w={471} $mr={13.5}>
            <Grid cols={HOUSE_COLS} />
            <thead>
              <tr><Band colSpan={6} $bg="#7f7f7f">1 、每月房屋费用</Band></tr>
            </thead>
            <tbody>
              <RoomHead />
              {COST_A.map(([name, ...vals], i) => (
                <tr key={name} style={{ height: HEIGHTS[i + 1] }}>
                  {i === 0 && <td rowSpan={7}>每套<br /><span style={{ lineHeight: "20px" }}>每月</span></td>}
                  <td>{name}</td>
                  {vals.map((v, c) => <Num key={c} $thick={c === 1}>{v}</Num>)}
                </tr>
              ))}
              <tr style={{ height: 25 }}>
                <td colSpan={2}>租赁套数</td>
                <Num>5</Num><Num $thick>3</Num><Num>2</Num><Num>10</Num>
              </tr>
              <tr style={{ height: 25 }}>
                <td colSpan={2}>费用合计</td>
                <Num>9,900</Num><Num $thick>9,780</Num><Num>7,720</Num><Num $fill>27,400</Num>
              </tr>
            </tbody>
          </Sheet>
          <Sheet $w={180} $mr={16}>
            <Grid cols={[98, 82]} />
            <thead>
              <tr><Band colSpan={2} $bg="#7f7f7f" $pl={6}>2、  每月其他费用</Band></tr>
            </thead>
            <tbody>
              {COST_B.map(([name, val, fill], i) => (
                <tr key={i} style={{ height: HEIGHTS[i] }}>
                  {name === "h" ? (
                    <Head colSpan={2}>{val}</Head>
                  ) : (
                    <>
                      <td>{name}</td>
                      <Num $fill={fill}>{val}</Num>
                    </>
                  )}
                </tr>
              ))}
            </tbody>
          </Sheet>
          <Sheet $w={340}>
            <Grid cols={[75.5, 75.5, 79, 110]} />
            <thead>
              <tr><Band colSpan={4} $bg="#7f7f7f">3、  一次性费用</Band></tr>
            </thead>
            <tbody>
              <tr style={{ height: 25 }}>
                <td>项目</td><td>件数</td><td>均价</td><td>合计费用</td>
              </tr>
              {COST_C.map(([name, ...vals], i) => (
                <tr key={name} style={{ height: HEIGHTS[i + 1] }}>
                  <td>{name}</td>
                  {vals.map((v, c) => <Num key={c}>{v}</Num>)}
                </tr>
              ))}
              <tr style={{ height: 25 }}>
                <td>合计</td>
                <Num $pr={6}>111</Num>
                <td>-</td>
                <Num $fill>40,000</Num>
              </tr>
            </tbody>
          </Sheet>
        </TableRow>
      </Section>
      <Section>
        <SectionTitle>二、收入与利润</SectionTitle>
        <TableRow>
          <Sheet $w={471} $mr={13.5}>
            <Grid cols={HOUSE_COLS} />
            <thead>
              <tr><Band colSpan={6} $bg="#2e72b5">1、年度收入</Band></tr>
            </thead>
            <tbody>
              <RoomHead size={13} />
              {INCOME.map(([name, ...vals], i) => (
                <tr key={name} style={{ height: i === 0 ? 25 : 26 }}>
                  {i === 0 && <td rowSpan={3} style={{ lineHeight: "17px" }}>每套<br />每年</td>}
                  <td>{name}</td>
                  {vals.map((v, c) => <Num key={c} $thick={c === 1}>{v}</Num>)}
                </tr>
              ))}
            </tbody>
          </Sheet>
          <Sheet $w={536}>
            <Grid cols={[98, 99, 75.5, 75.5, 79, 109]} />
            <thead>
              <tr><Band colSpan={6} $bg="#2e72b5">2、利润测算</Band></tr>
            </thead>
            <tbody>
              <tr style={{ height: 25 }}>
                <td>开店年份</td><td>累计收入</td><td>累计成本</td><td>累计利润</td><td>备注</td><td>说明</td>
              </tr>
              {PROFIT.map(([year, ...vals], i) => (
                <tr key={i} style={{ height: i === 0 ? 25 : 26 }}>
                  <td>{year}</td>
                  {vals.map((v, c) => <Num key={c}>{v}</Num>)}
                  <td />
                  {i === 0 && (
                    <Note rowSpan={6}>
                      由于床、桌子等回<br />
                      收价值较低，因为统<br />
                      一类做成本计算，暂<br />
                      不考虑残值
                    </Note>
                  )}
                </tr>
              ))}
            </tbody>
          </Sheet>
        </TableRow>
      </Section>
    </Forecast>
  );
}

/* ---------- page ---------- */
const COLS_A = [["A", 10], ["B", 12], ["C", 86], ["D", 73], ["E", 87], ["F", 104], ["G", 105], ["H", 88], ["I", 92], ["J", 98], ["K", 13], ["L", 9], ["M", 41], ["N", 93], ["O", 107], ["P", 12], ["Q", 15]];
const COLS_B = [["B", 8], ["C", 42], ["D", 97], ["E", 87], ["F", 86], ["G", 84], ["H", 76], ["I", 15], ["J", 98], ["K", 82], ["L", 17], ["M", 75], ["N", 75], ["O", 79], ["P", 109], ["Q", 13], ["R", 7]];
const ROWS_A = [4, 13, 46, 28, 63, 27, 26, 27, 10, 16, 33, 21, 25, 24, 25, 20, 21, 24, 20, 25, 25, 20, 20];
const ROWS_B = [41, 13, 35, 35, 25, 26, 25, 25, 26, 25, 25, 26, 25, 25, 11, 7, 36, 35, 25, 25, 26, 26];

const LEAD = [["W", "酒店会计"], ["W", "42笔酒店"], ["W", "酒店财务"], ["W", "酒店行业"], ["P", "酒店行业"], ["S", "餐饮店"], ["S", "酒店"], ["S", "财务"]];
const tabsOf = (count) => [...LEAD, ...Array.from({ length: count }, () => ["S", "酒店"])];

export default function App() {
  return (
    <Page>
      <GlobalStyle />
      <Window $h={749}>
        <TabRow tabs={tabsOf(9)} active={9} />
        <MenuRow />
        <Ribbon />
        <FormulaRow $mb={8}>
          <NameBox>T10<ChevronDown size={8} strokeWidth={1.4} color="#888" /></NameBox>
          <FormulaInput><ZoomIn size={11} strokeWidth={1.2} color="#555" /><Fx>fx</Fx></FormulaInput>
        </FormulaRow>
        <Columns cols={COLS_A} h={20} cornerW={35} serif />
        <SheetBody>
          <Rows rows={ROWS_A} width={35} serif sel={10} />
          <RoomDashboard />
        </SheetBody>
        <SheetTabs h={19} sheets={["Sheet1", "账户统计", "使用说明"]} thumb={263} />
        <Status h={14} />
      </Window>
      <Window $h={747}>
        <TabRow tabs={tabsOf(9)} active={10} />
        <MenuRow />
        <Ribbon alt />
        <FormulaRow $mb={6}>
          <NameBox>S9<ChevronDown size={8} strokeWidth={1.4} color="#888" /></NameBox>
          <FormulaInput><ZoomIn size={11} strokeWidth={1.2} color="#555" /><Fx>fx</Fx></FormulaInput>
        </FormulaRow>
        <Columns cols={COLS_B} h={17} cornerW={30} />
        <SheetBody>
          <Rows rows={ROWS_B} width={30} sel={9} />
          <ForecastSheet />
        </SheetBody>
        <SheetTabs h={18} sheets={["sheet"]} thumb={34} />
        <Status h={14} />
      </Window>
    </Page>
  );
}
